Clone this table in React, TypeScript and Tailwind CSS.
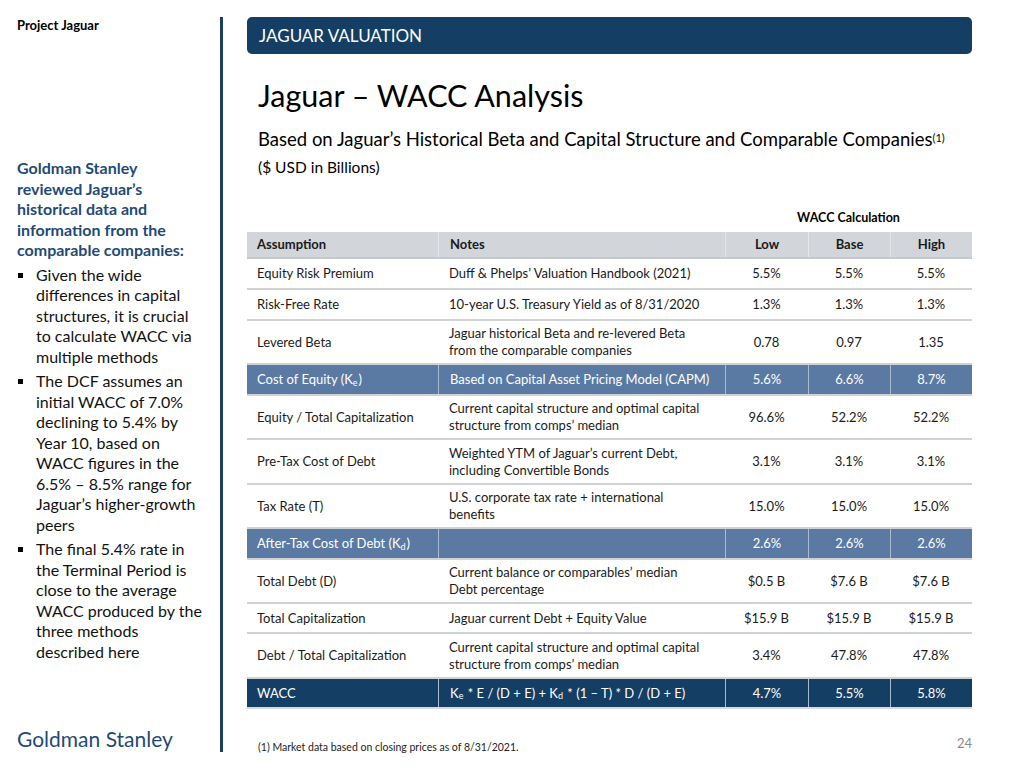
import React from "react";

const NAVY = "bg-[#143e64]";

type Row = {
  a: React.ReactNode;
  n: React.ReactNode;
  v: [string, string, string];
  h: string;
  kind?: "mid" | "dark";
};

const Sub = ({ c }: { c: string }) => (
  <sub className="text-[9px] relative top-[3px] align-baseline mr-[1px]">{c}</sub>
);

const rows: Row[] = [
  { a: "Equity Risk Premium", n: "Duff & Phelps’ Valuation Handbook (2021)", v: ["5.5%", "5.5%", "5.5%"], h: "h-[31px]" },
  { a: "Risk-Free Rate", n: "10-year U.S. Treasury Yield as of 8/31/2020", v: ["1.3%", "1.3%", "1.3%"], h: "h-[31px]" },
  { a: "Levered Beta", n: <>Jaguar historical Beta and re-levered Beta<br />from the comparable companies</>, v: ["0.78", "0.97", "1.35"], h: "h-[44px]" },
  { a: <>Cost of Equity (K<Sub c="e" />)</>, n: "Based on Capital Asset Pricing Model (CAPM)", v: ["5.6%", "6.6%", "8.7%"], h: "h-[31px]", kind: "mid" },
  { a: "Equity / Total Capitalization", n: <>Current capital structure and optimal capital<br />structure from comps’ median</>, v: ["96.6%", "52.2%", "52.2%"], h: "h-[44px]" },
  { a: "Pre-Tax Cost of Debt", n: <>Weighted YTM of Jaguar’s current Debt,<br />including Convertible Bonds</>, v: ["3.1%", "3.1%", "3.1%"], h: "h-[45px]" },
  { a: "Tax Rate (T)", n: <>U.S. corporate tax rate + international<br />benefits</>, v: ["15.0%", "15.0%", "15.0%"], h: "h-[44px]" },
  { a: <>After-Tax Cost of Debt (K<Sub c="d" />)</>, n: "", v: ["2.6%", "2.6%", "2.6%"], h: "h-[31px]", kind: "mid" },
  { a: "Total Debt (D)", n: <>Current balance or comparables’ median<br />Debt percentage</>, v: ["$0.5 B", "$7.6 B", "$7.6 B"], h: "h-[44px]" },
  { a: "Total Capitalization", n: "Jaguar current Debt + Equity Value", v: ["$15.9 B", "$15.9 B", "$15.9 B"], h: "h-[30px]" },
  { a: "Debt / Total Capitalization", n: <>Current capital structure and optimal capital<br />structure from comps’ median</>, v: ["3.4%", "47.8%", "47.8%"], h: "h-[45px]" },
  { a: "WACC", n: <>K<Sub c="e" />&nbsp;* E / (D + E) + K<Sub c="d" />&nbsp;* (1 – T) * D / (D + E)</>, v: ["4.7%", "5.5%", "5.8%"], h: "h-[30px]", kind: "dark" },
];

function TableRow({ r, last }: { r: Row; last: boolean }) {
  const colored = r.kind === "mid" || r.kind === "dark";
  const bg = r.kind === "mid" ? "bg-[#5a7aa3] text-white" : r.kind === "dark" ? `${NAVY} text-white` : "text-[#1a1a1a]";
  const border = last ? "border-b-2 border-[#d9d9d9]" : "border-b-2 border-[#cfd3d6]";
  const div = colored ? "border-l border-[#a9bbd1]" : "";
  return (
    <div className={`grid grid-cols-[191px_287px_83px_82px_82px] ${r.h} ${bg} ${border} text-[13px] leading-[17px]`}>
      <div className="flex items-center pl-[10px] whitespace-nowrap">{r.a}</div>
      <div className={`flex items-center pl-[11px] whitespace-nowrap ${div}`}>{r.n}</div>
      {r.v.map((x, i) => (
        <div key={i} className={`flex items-center justify-center ${div}`}>{x}</div>
      ))}
    </div>
  );
}

export default function App() {
  return (
    <div
      className="w-[1024px] h-[768px] bg-white flex overflow-hidden"
      style={{ fontFamily: "Lato, 'Open Sans', sans-serif" }}
    >
      {/* Sidebar */}
      <div className="w-[220px] pl-[17px] pr-[17px] flex flex-col">
        <div className="mt-[17px] text-[13px] font-bold text-black leading-[17px]">Project Jaguar</div>
        <div className="mt-[124px] text-[16px] leading-[20.5px] font-bold text-[#1f4a76]">
          Goldman Stanley reviewed Jaguar’s historical data and information from the comparable companies:
        </div>
        <ul className="text-[16px] leading-[20.5px] text-[#111]">
          {[
            "Given the wide differences in capital structures, it is crucial to calculate WACC via multiple methods",
            "The DCF assumes an initial WACC of 7.0% declining to 5.4% by Year 10, based on WACC figures in the 6.5% – 8.5% range for Jaguar’s higher-growth peers",
            "The final 5.4% rate in the Terminal Period is close to the average WACC produced by the three methods described here",
          ].map((t, i) => (
            <li key={i} className="flex mt-[4px]">
              <span className="w-[19px] shrink-0 pt-[8px]">
                <span className="block w-[5px] h-[5px] bg-black ml-[1px]" />
              </span>
              <span>{t}</span>
            </li>
          ))}
        </ul>
        <div className="mt-auto mb-[16px] text-[21px] text-[#1f4a76] leading-[26px]">Goldman Stanley</div>
      </div>

      {/* Divider */}
      <div className="w-[3px] bg-[#1c3f66] mt-[17px] mb-[16px]" />

      {/* Main */}
      <div className="pl-[24px] w-[749px] flex flex-col">
        <div className={`mt-[17px] h-[37px] ${NAVY} rounded-[5px] flex items-center pl-[12px] text-white text-[17px]`}>
          JAGUAR VALUATION
        </div>
        <div className="mt-[21px] pl-[11px] text-[30.5px] leading-[40px] text-black">Jaguar – WACC Analysis</div>
        <div className="mt-[12px] pl-[11px] text-[18.5px] leading-[24px] text-black whitespace-nowrap">
          Based on Jaguar’s Historical Beta and Capital Structure and Comparable Companies
          <sup className="text-[11px] relative -top-[4px]">(1)</sup>
        </div>
        <div className="mt-[6px] pl-[11px] text-[15.5px] leading-[20px] text-black">($ USD in Billions)</div>

        <div className="mt-[33px] grid grid-cols-[478px_247px] text-[12.5px] font-bold leading-[16px]">
          <div />
          <div className="text-center">WACC Calculation</div>
        </div>
        <div className="mt-[6px] grid grid-cols-[191px_287px_83px_82px_82px] h-[27px] bg-[#d2d6da] text-[13px] font-bold text-[#1a1a1a] border-b-2 border-[#c4c9ce]">
          <div className="flex items-center pl-[10px]">Assumption</div>
          <div className="flex items-center pl-[11px] border-l border-[#e4e7ea]">Notes</div>
          <div className="flex items-center justify-center border-l border-[#e4e7ea]">Low</div>
          <div className="flex items-center justify-center border-l border-[#e4e7ea]">Base</div>
          <div className="flex items-center justify-center border-l border-[#e4e7ea]">High</div>
        </div>
        {rows.map((r, i) => (
          <TableRow key={i} r={r} last={i === rows.length - 1} />
        ))}
        <div className="mt-auto mb-[14px] flex items-end justify-between">
          <div className="pl-[11px] text-[10.5px] text-[#222] leading-[14px]">(1) Market data based on closing prices as of 8/31/2021.</div>
          <div className="text-[13px] text-[#8a8a8a] leading-[16px] mb-[3px]">24</div>
        </div>
      </div>
    </div>
  );
}
